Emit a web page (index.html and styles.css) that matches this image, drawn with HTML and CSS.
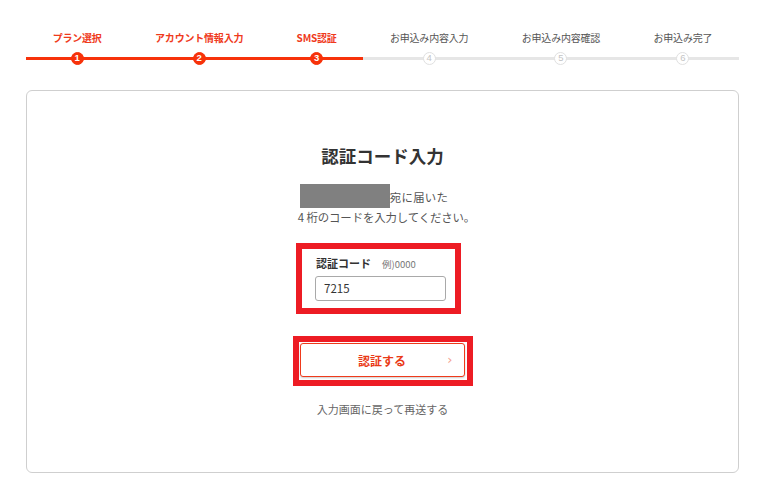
FILE: index.html
```html
<!DOCTYPE html>
<html lang="ja">
<head>
<meta charset="utf-8">
<title>認証コード入力</title>
<link rel="stylesheet" href="styles.css">
</head>
<body>
<div class="page">
  <ol class="steps">
    <li class="step done"><span class="step-label">プラン選択</span><span class="track"><span class="dot">1</span></span></li>
    <li class="step done"><span class="step-label">アカウント情報入力</span><span class="track"><span class="dot">2</span></span></li>
    <li class="step done"><span class="step-label">SMS認証</span><span class="track"><span class="dot">3</span></span></li>
    <li class="step"><span class="step-label">お申込み内容入力</span><span class="track"><span class="dot">4</span></span></li>
    <li class="step"><span class="step-label">お申込み内容確認</span><span class="track"><span class="dot">5</span></span></li>
    <li class="step"><span class="step-label">お申込み完了</span><span class="track"><span class="dot">6</span></span></li>
  </ol>

  <section class="card">
    <h1 class="title">認証コード入力</h1>
    <div class="desc">
      <p class="desc-line1"><span class="masked"></span><span>宛に届いた</span></p>
      <p class="desc-line2">4 桁のコードを入力してください。</p>
    </div>

    <div class="mark mark-field">
      <div class="field">
        <div class="field-head"><span class="field-label">認証コード</span><span class="field-example">例)0000</span></div>
        <div class="input">7215</div>
      </div>
    </div>

    <div class="mark mark-button">
      <button class="submit" type="button"><span class="submit-text">認証する</span><span class="chev">›</span></button>
    </div>

    <a class="resend" href="#">入力画面に戻って再送する</a>
  </section>
</div>
</body>
</html>
```

FILE: styles.css
```css
* { box-sizing: border-box; }
html, body { margin: 0; padding: 0; background: #fff; }
body {
  font-family: "Noto Sans CJK JP", "Noto Sans", "Liberation Sans", sans-serif;
  color: #333;
}
.page { padding: 0 20px 0 26px; }

.steps {
  list-style: none;
  margin: 0;
  padding: 31px 0 0;
  display: flex;
}
.step {
  flex: 1 1 auto;
  display: flex;
  flex-direction: column;
  align-items: center;
}
.step-label {
  font-size: 10px;
  line-height: 14px;
  color: #555;
  white-space: nowrap;
  letter-spacing: -0.2px;
}
.step.done .step-label { color: #ef3a1c; font-weight: 700; }
.track {
  position: relative;
  align-self: stretch;
  height: 12px;
  margin-top: 7px;
  display: flex;
  justify-content: center;
}
.track::before {
  content: "";
  position: absolute;
  left: 0; right: 0; top: 5px;
  height: 3px;
  background: #e6e6e6;
}
.step.done .track::before { background: #f7320a; }
.dot {
  position: relative;
  width: 13px; height: 13px;
  margin-top: -0.5px;
  border-radius: 50%;
  background: #fff;
  border: 1.5px solid #e0e0e0;
  color: #c4c4c4;
  font-family: "Liberation Sans", sans-serif;
  font-size: 9.5px;
  line-height: 10px;
  text-align: center;
}
.step.done .dot {
  background: #f7320a;
  border-color: #f7320a;
  color: #fff;
  font-weight: 700;
}

.card {
  margin-top: 26px;
  height: 383px;
  border: 1px solid #cfcfcf;
  border-radius: 6px;
  padding-top: 53px;
  display: flex;
  flex-direction: column;
  align-items: center;
}
.title {
  margin: 0;
  font-size: 17.5px;
  line-height: 24px;
  font-weight: 700;
  color: #333;
}
.desc {
  margin-top: 16px;
  display: flex;
  flex-direction: column;
  align-items: center;
  font-size: 11.4px;
  color: #555;
}
.desc p { margin: 0; }
.desc-line1 {
  display: flex;
  align-items: center;
  height: 24px;
  margin-right: 17px !important;
  padding-top: 2px;
}
.desc-line2 { line-height: 18px; margin-left: 8px !important; letter-spacing: -0.1px; }
.masked {
  display: block;
  width: 90px;
  height: 24px;
  margin-top: -2px;
  background: #808080;
}
.desc-line1 span + span { letter-spacing: 0.3px; }

.mark { border: 6px solid #ed1c24; }
.mark-field {
  margin-top: 17px;
  margin-right: 8px;
  width: 165px;
  padding: 6px 9px 7px 13px;
}
.field-head { display: flex; align-items: baseline; height: 16px; line-height: 16px; }
.field-label { font-size: 11px; font-weight: 700; color: #333; margin-left: 1px; }
.field-example { font-size: 9.5px; color: #777; margin-left: 11px; }
.input {
  margin-top: 5px;
  width: 131px;
  height: 25px;
  border: 1px solid #a9a9a9;
  border-radius: 3px;
  padding: 0 8px;
  font-size: 11.5px;
  line-height: 23px;
  color: #333;
}

.mark-button {
  margin-top: 22px;
  width: 180px;
  padding: 1px 2px 3px 1px;
}
.submit {
  position: relative;
  display: flex;
  align-items: center;
  justify-content: center;
  width: 165px;
  height: 34px;
  background: #fff;
  border: 1px solid #ef3a1c;
  border-radius: 3px;
  box-shadow: 0 1px 2px rgba(0,0,0,0.2);
  padding: 0;
  font-family: inherit;
  cursor: pointer;
}
.submit-text {
  font-size: 12px;
  font-weight: 700;
  color: #ea3a17;
}
.chev {
  position: absolute;
  right: 11px;
  top: 8px;
  font-size: 13px;
  line-height: 16px;
  color: #f4a190;
  font-family: "DejaVu Sans", sans-serif;
}
.resend {
  margin-top: 15px;
  font-size: 11px;
  line-height: 16px;
  color: #666;
  text-decoration: none;
}
```
